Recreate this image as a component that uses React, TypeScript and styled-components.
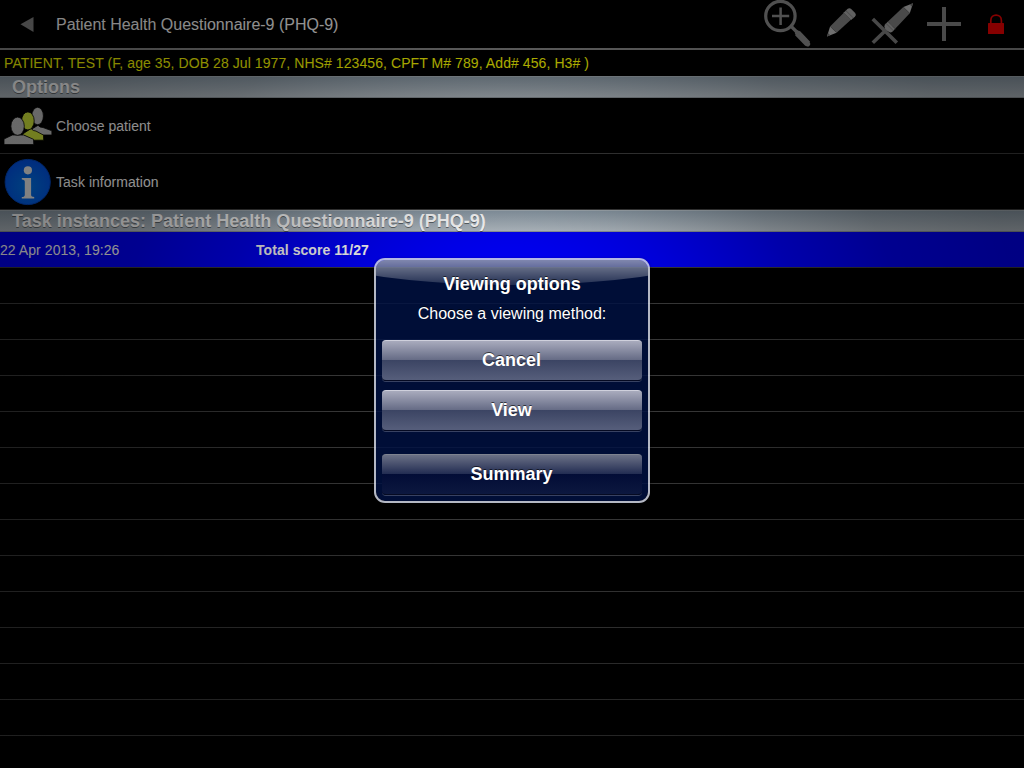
import React from "react";
import styled, { createGlobalStyle } from "styled-components";

const GlobalStyle = createGlobalStyle`
  * { box-sizing: border-box; }
  body {
    margin: 0;
    background: #000;
    color: #fff;
    font-family: "Liberation Sans", Helvetica, Arial, sans-serif;
    overflow: hidden;
  }
`;

const Screen = styled.div`
  position: relative;
  width: 1024px;
  height: 768px;
  display: flex;
  flex-direction: column;
  overflow: hidden;
  background: #000;
`;

const Header = styled.header`
  flex: none;
  height: 50px;
  display: flex;
  gap: 4px;
  padding: 0 4px;
  border-bottom: 2px solid #888;
`;

const Icon = styled.svg`
  flex: none;
  width: 48px;
  height: 48px;
  display: block;
`;

const Title = styled.h1`
  flex: 1;
  margin: 0;
  font-size: 16px;
  font-weight: 400;
  line-height: 49px;
  letter-spacing: -0.01px;
  white-space: nowrap;
`;

const PatientLine = styled.div`
  flex: none;
  height: 26px;
  padding-left: 4px;
  font-size: 14px;
  line-height: 26px;
  letter-spacing: 0.078px;
  color: #ff0;
  white-space: nowrap;
`;

const SectionHeader = styled.h2`
  flex: none;
  height: 22px;
  margin: 0;
  padding-left: 12px;
  border-top: 1px solid #a3adb4;
  border-bottom: 1px solid #8e959b;
  background: linear-gradient(#8b9aa6, #b4bdc4);
  font-size: 18px;
  font-weight: 700;
  line-height: 21px;
  letter-spacing: 0.02px;
  text-shadow: 0 1px 0 rgba(0, 0, 0, 0.45);
  white-space: nowrap;
`;

const OptionRow = styled.div`
  flex: none;
  height: 56px;
  display: flex;
  align-items: center;
  gap: 4px;
  padding-left: 4px;
  border-bottom: 1px solid #3c3c3c;
  font-size: 14px;
  letter-spacing: 0.04px;
`;

const TaskRow = styled.div<{ $selected?: boolean }>`
  flex: none;
  height: 36px;
  display: grid;
  grid-template-columns: 256px 1fr;
  align-items: center;
  border-bottom: 1px solid #3c3c3c;
  background: ${(p) => (p.$selected ? "#0000f8" : "transparent")};
  font-size: 14px;
  letter-spacing: 0.06px;
`;

const Score = styled.span`
  font-weight: 700;
`;

const Dimmer = styled.div`
  position: absolute;
  inset: 0;
  background: radial-gradient(
    circle 640px at 50% 50%,
    rgba(0, 0, 0, 0) 12%,
    rgba(0, 0, 0, 0.05) 21%,
    rgba(0, 0, 0, 0.13) 30%,
    rgba(0, 0, 0, 0.31) 47%,
    rgba(0, 0, 0, 0.42) 62%,
    rgba(0, 0, 0, 0.47) 80%,
    rgba(0, 0, 0, 0.48) 100%
  );
`;

const Dialog = styled.div`
  position: absolute;
  left: 374px;
  top: 258px;
  width: 276px;
  height: 245px;
  display: flex;
  flex-direction: column;
  padding: 0 6px;
  border: 2px solid rgba(210, 214, 228, 0.86);
  border-radius: 11px;
  background: rgba(0, 17, 66, 0.84);
  background-clip: padding-box;
  overflow: hidden;
  text-align: center;
  box-shadow: 0 1px 3px rgba(0, 0, 0, 0.5);

  &::before {
    content: "";
    position: absolute;
    left: -80px;
    right: -80px;
    top: -60px;
    height: 85px;
    border-radius: 0 0 50% 50% / 0 0 42px 42px;
    background: linear-gradient(
      rgba(255, 255, 255, 0.5) 60px,
      rgba(255, 255, 255, 0.13) 85px
    );
  }
`;

const DialogTitle = styled.h3`
  position: relative;
  margin: 0;
  padding-top: 14px;
  font-size: 18px;
  line-height: 20px;
  text-shadow: 0 -1px 0 rgba(0, 0, 0, 0.6);
`;

const DialogMessage = styled.p`
  margin: 10px 0 16px;
  font-size: 16px;
  line-height: 20px;
  text-shadow: 0 -1px 0 rgba(0, 0, 0, 0.6);
`;

const DialogButton = styled.button<{ $dark?: boolean }>`
  flex: none;
  height: 41px;
  margin: ${(p) => (p.$dark ? "14px" : "0")} 0 9px;
  padding: 0 1px 1px 0;
  border: 0;
  border-top: 1px solid ${(p) => (p.$dark ? "#7e8390" : "#cfd0dc")};
  border-bottom: 1px solid #050a22;
  border-radius: 4px;
  background: ${(p) =>
    p.$dark
      ? "linear-gradient(#6b7186 0, #222c52 19px, #020c36 19px, #0c183f 100%)"
      : "linear-gradient(#a9abbd 0, #656b85 19px, #3b4463 19px, #565e7b 100%)"};
  box-shadow: 0 1px 0 rgba(255, 255, 255, 0.22);
  color: #fff;
  font: 700 18px/20px "Liberation Sans", Helvetica, Arial, sans-serif;
  text-shadow: 0 -1px 0 rgba(0, 0, 0, 0.6);
`;

const BackIcon = () => (
  <Icon viewBox="0 0 48 48">
    <path d="M16.5 24.3 29.5 17v15z" fill="#888" />
  </Icon>
);

const ZoomIcon = () => (
  <Icon viewBox="0 0 48 48" fill="none" stroke="#909090">
    <circle cx="16.4" cy="16" r="14.7" strokeWidth="3.2" />
    <path d="M8 16h17.2M16.6 7.5V25" strokeWidth="2.5" />
    <path d="m27.3 26.5 7 7" strokeWidth="3.2" />
    <path d="m33.4 33 10.4 10.9" strokeWidth="6.4" strokeLinejoin="round" />
    <path d="m33.4 33 10.4 10.9" strokeWidth="5" strokeLinecap="round" />
  </Icon>
);

const PencilIcon = () => (
  <Icon viewBox="0 0 48 48">
    <path d="m11 36.6 3.1-10.2 6.5 6.4z" fill="#ccc" />
    <path d="m11 36.6 1-3.5 2.4 2.2z" fill="#777" />
    <path d="m14.1 26.4 14.7-14.7 7.2 7.1-15.4 14z" fill="#8c8c8c" />
    <path d="m27.7 12.7 3.7-3.7q2-1.6 3.8 0l4 4q1.6 2-.3 3.7l-3.9 3.4z" fill="#b4b4b4" />
    <path d="m27.5 12.6 7.5 7.4M29.8 10.5l7.5 7.4" stroke="#7c7c7c" strokeWidth=".8" />
  </Icon>
);

const DeleteIcon = () => (
  <Icon viewBox="0 0 48 48">
    <path d="m4.8 19 24 23.8M28.2 20.2 4.8 42.8" stroke="#888" strokeWidth="3.6" fill="none" />
    <path d="m45 3.3-3.2 10-6.4-6.4z" fill="#ccc" />
    <path d="m45 3.3-1 3.5-2.4-2.2z" fill="#777" />
    <path d="M35.4 6.9 20 21.6l7.2 7.1 14.6-15.4z" fill="#8c8c8c" />
    <path d="m20 21.6 7.2 7.1-2.8 3q-2 1.4-3.8 0L17 28.4q-1.4-2 0-3.8z" fill="#b4b4b4" />
    <path d="m19.9 21.5 7.4 7.4m-9.3-5.5 7.4 7.4" stroke="#7c7c7c" strokeWidth=".8" />
  </Icon>
);

const AddIcon = () => (
  <Icon viewBox="0 0 48 48">
    <path d="M7 24h34M24 7v34" stroke="#8c8c8c" strokeWidth="4" />
  </Icon>
);

const LockIcon = () => (
  <Icon viewBox="0 0 48 48">
    <path d="M18.8 24v-3.6c0-7 10.6-7 10.6 0V24" fill="none" stroke="#ff0000" strokeWidth="1.7" />
    <rect x="16" y="23" width="16" height="11" rx=".5" fill="#ff0000" />
  </Icon>
);

const PeopleIcon = () => (
  <Icon viewBox="0 0 48 48" stroke="#000" strokeWidth=".8">
    <path d="M26 29.5q3-3.8 8-6.2 2 2.4 5 2.2l8.9 3.3v4.2h-9z" fill="#c6c6c6" />
    <ellipse cx="33.6" cy="14" rx="5.8" ry="8.7" fill="#c6c6c6" />
    <path d="m18 32.5 9-6q2 2.6 5 2.6l7.5 4 .2 5.1H29z" fill="#d9ee3c" />
    <ellipse cx="23.9" cy="18.9" rx="6.3" ry="9" fill="#d9ee3c" />
    <path d="M0 42.6V37l8.4-4h11.3l9.8 4.3.3 5.3z" fill="#c6c6c6" />
    <ellipse cx="13.6" cy="24.2" rx="6.7" ry="9.1" fill="#c6c6c6" />
  </Icon>
);

const InfoIcon = () => (
  <Icon viewBox="0 0 48 48">
    <defs>
      <radialGradient id="infoFill" cx="50%" cy="60%" r="58%">
        <stop offset="0" stopColor="#007af0" />
        <stop offset="1" stopColor="#0054ee" />
      </radialGradient>
    </defs>
    <circle cx="23.7" cy="24" r="22.6" fill="url(#infoFill)" stroke="#0048c4" strokeWidth="1" />
    <circle cx="23.9" cy="12.3" r="4.1" fill="#f4f4f4" />
    <path
      d="M17.8 20h9.3v16.9q0 1.8 3.1 2.1v1.6H17.8V39q3-.2 3-2.1V23.8q0-2-3-2.2z"
      fill="#f4f4f4"
    />
  </Icon>
);

const emptyRows = Array.from({ length: 14 }, (_, i) => i);

export default function App() {
  return (
    <>
      <GlobalStyle />
      <Screen>
        <Header>
          <BackIcon />
          <Title>Patient Health Questionnaire-9 (PHQ-9)</Title>
          <ZoomIcon />
          <PencilIcon />
          <DeleteIcon />
          <AddIcon />
          <LockIcon />
        </Header>
        <PatientLine>
          PATIENT, TEST (F, age 35, DOB 28 Jul 1977, NHS# 123456, CPFT M# 789, Add# 456, H3# )
        </PatientLine>
        <SectionHeader>Options</SectionHeader>
        <OptionRow>
          <PeopleIcon />
          <span>Choose patient</span>
        </OptionRow>
        <OptionRow>
          <InfoIcon />
          <span>Task information</span>
        </OptionRow>
        <SectionHeader>Task instances: Patient Health Questionnaire-9 (PHQ-9)</SectionHeader>
        <TaskRow $selected>
          <span>22 Apr 2013, 19:26</span>
          <Score>Total score 11/27</Score>
        </TaskRow>
        {emptyRows.map((row) => (
          <TaskRow key={row} />
        ))}
        <Dimmer />
        <Dialog role="dialog">
          <DialogTitle>Viewing options</DialogTitle>
          <DialogMessage>Choose a viewing method:</DialogMessage>
          <DialogButton>Cancel</DialogButton>
          <DialogButton>View</DialogButton>
          <DialogButton $dark>Summary</DialogButton>
        </Dialog>
      </Screen>
    </>
  );
}
